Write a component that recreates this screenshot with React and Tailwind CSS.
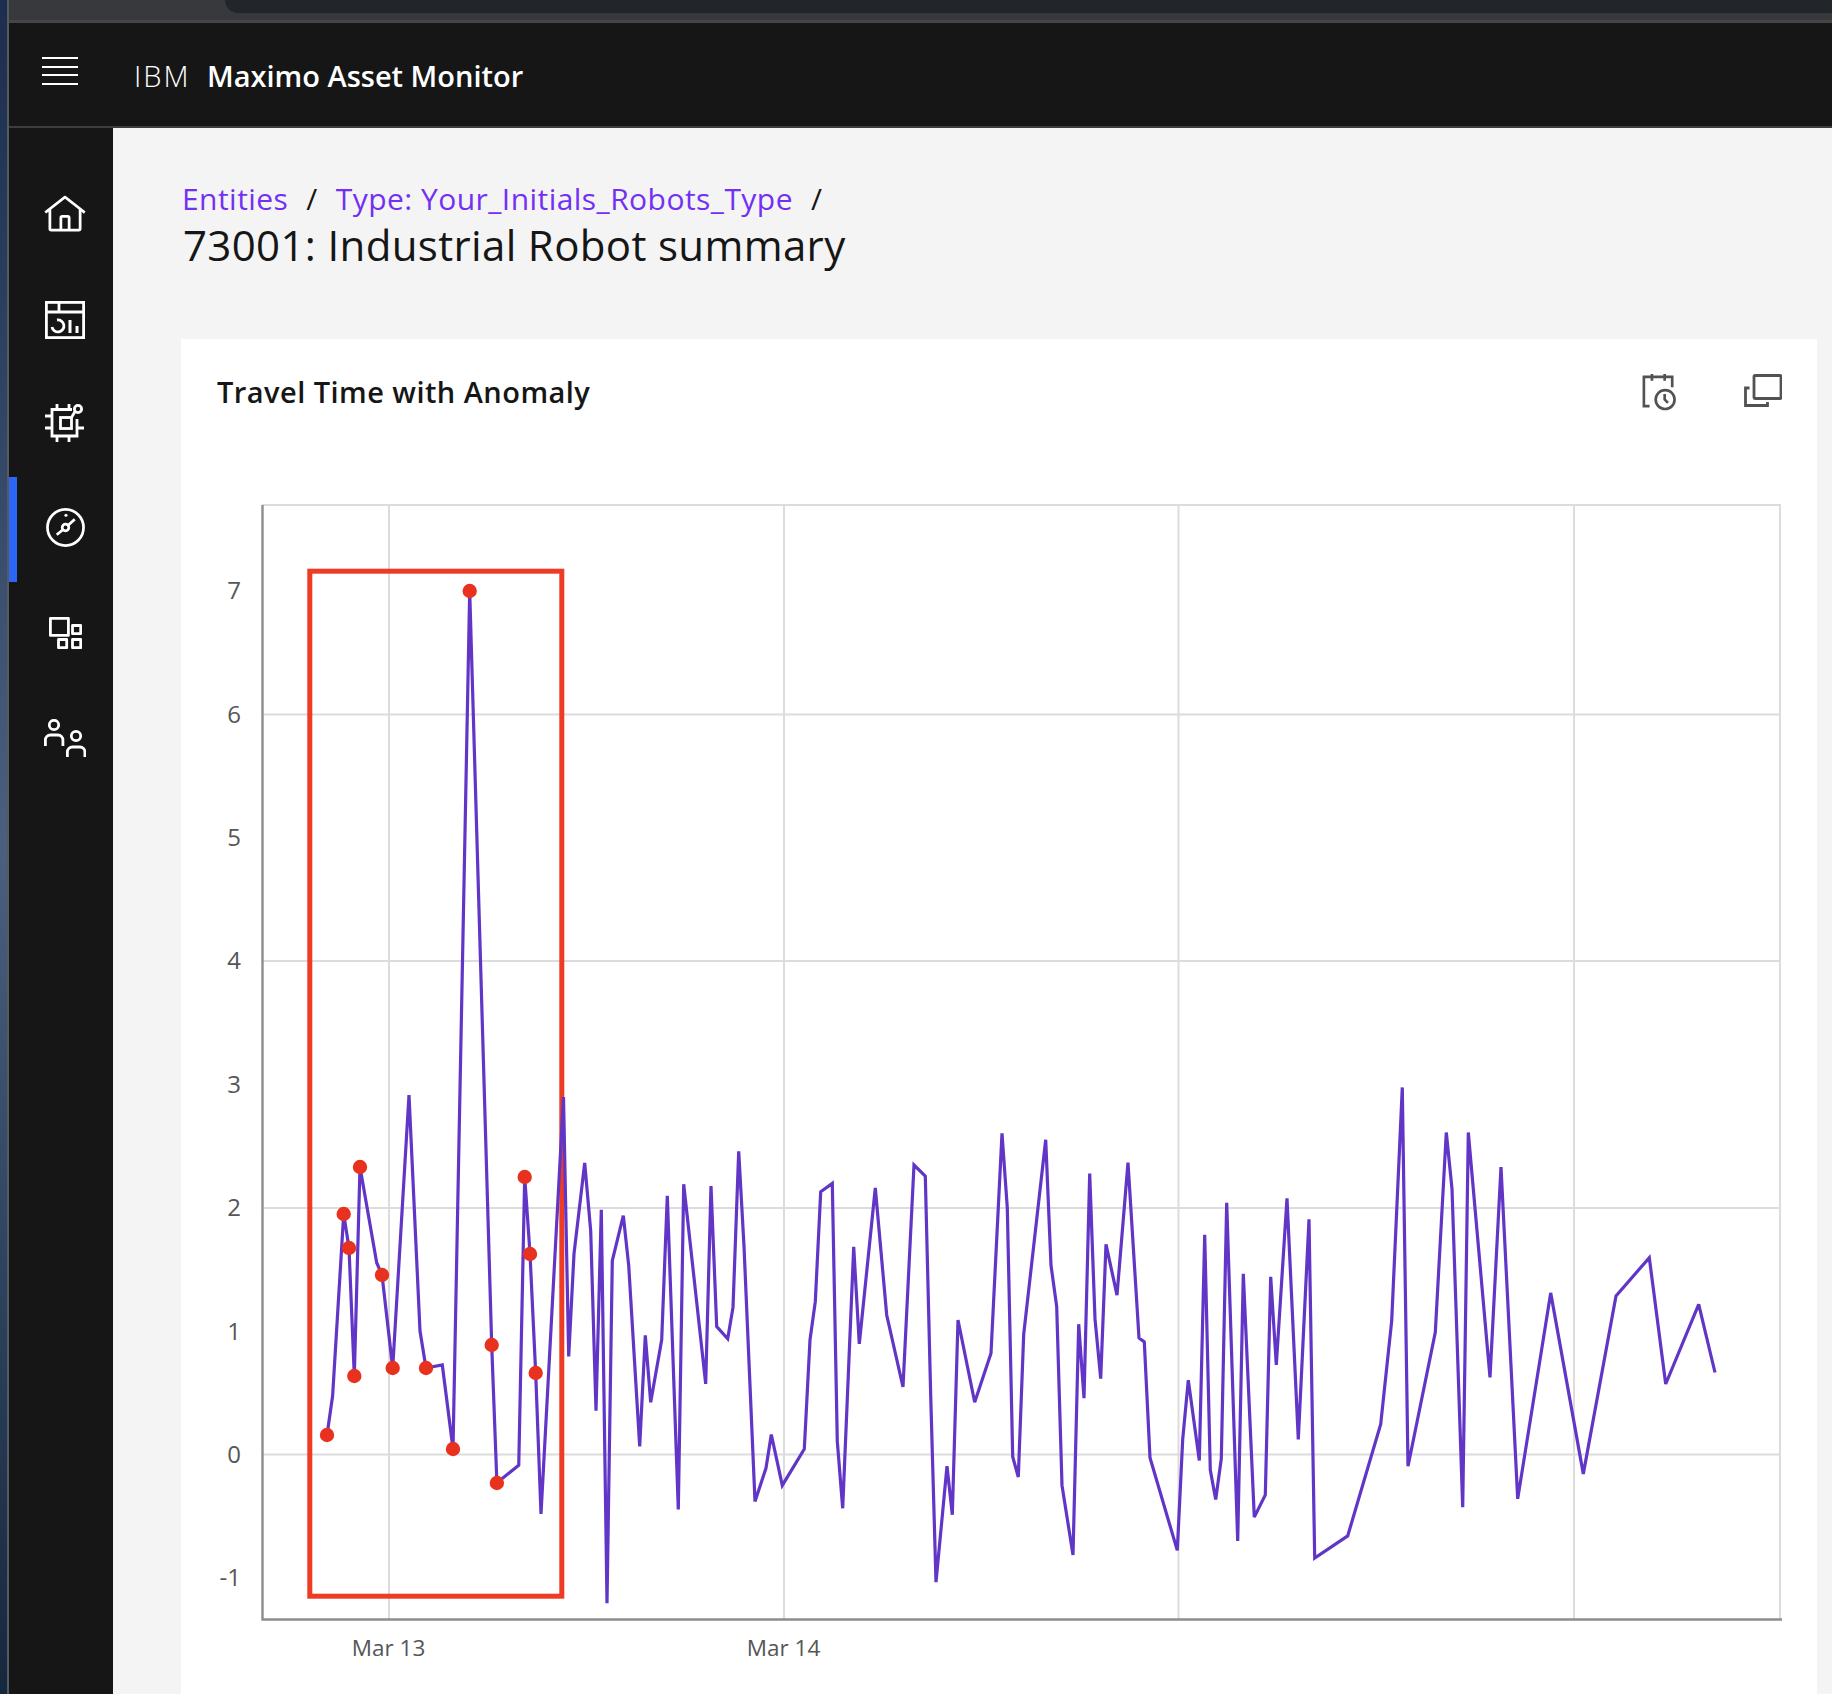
import React from 'react';

const sans = "font-['Open_Sans','Liberation_Sans',sans-serif]";

// series in page pixels, read off the chart
const series = [
  [327, 1434], [332.6, 1395], [343.7, 1213], [349, 1247], [354.3, 1375], [360, 1166], [376.7, 1261.7], [382, 1274],
  [392.7, 1367], [409, 1094], [420, 1330], [426, 1367], [442.3, 1364], [453, 1447.7], [469.7, 590], [491.7, 1344],
  [496.9, 1481.7], [518.75, 1464.3], [524.7, 1175.7], [530, 1252.7], [535.7, 1372.3], [541, 1513], [563.5, 1096],
  [568.7, 1355.4], [574, 1252.8], [584.7, 1162], [590.7, 1229.9], [596, 1409.7], [601.3, 1208.8], [607, 1602.2],
  [612.3, 1259.7], [623.3, 1214.6], [628.7, 1264.3], [639.7, 1445.3], [645.3, 1334.3], [650.7, 1401.3], [661.7, 1338.9],
  [667.3, 1194.7], [678.3, 1508.5], [683.7, 1183.2], [705.7, 1382.9], [711, 1185.1], [716.7, 1325.5], [727.7, 1337.8],
  [733, 1306.4], [738.7, 1150.3], [744, 1245.2], [755, 1500.4], [766, 1467.1], [771.3, 1433.5], [782.3, 1484.4],
  [804.3, 1448], [810, 1338.9], [815.3, 1300.7], [820.7, 1190.8], [832.3, 1182.4], [837.3, 1440.4], [842.7, 1507.3],
  [853.7, 1245.9], [859.3, 1342.8], [875.3, 1187], [886.7, 1314], [903, 1386], [914, 1164], [925.3, 1175.1],
  [930.7, 1394.4], [936, 1581.2], [947, 1465.2], [952.3, 1513.8], [958, 1319], [974.7, 1401.3], [991, 1352.3],
  [1002, 1132.3], [1007.3, 1206.9], [1012.7, 1455.7], [1018.3, 1476], [1023.7, 1333.2], [1045.7, 1138.8], [1051, 1264.3],
  [1056.7, 1305.6], [1062, 1484.4], [1073, 1554], [1078.7, 1323.2], [1084, 1397.1], [1089.7, 1172.5], [1095, 1317.9],
  [1100.7, 1377.6], [1106, 1243.3], [1117, 1294.2], [1128, 1161.7], [1139, 1337], [1144.3, 1340.9], [1150, 1456.8],
  [1177.3, 1549.4], [1182.7, 1438.4], [1188.3, 1379.1], [1199.3, 1459.5], [1204.7, 1233.7], [1210.3, 1469.1],
  [1215.7, 1498.5], [1221.3, 1457.6], [1226.7, 1201.9], [1237.7, 1539.9], [1243.3, 1272.7], [1254.3, 1516.1],
  [1265.3, 1493.9], [1270.7, 1275.8], [1276.3, 1363.8], [1287, 1197.3], [1298.3, 1438.4], [1309, 1218.4], [1314.7, 1557.1],
  [1347.7, 1534.9], [1380.7, 1423.1], [1391.7, 1319.8], [1402.3, 1086.4], [1408, 1465.2], [1435.3, 1331.3], [1446.3, 1131.5],
  [1452, 1187.8], [1462.7, 1506.2], [1468.3, 1131.5], [1490, 1376.4], [1501, 1166], [1517.7, 1497.8], [1550.7, 1291.9],
  [1583.3, 1472.9], [1616, 1294.9], [1649.3, 1256.7], [1665.7, 1383], [1698.7, 1303.4], [1715, 1371.5],
];

const anomalies = [
  [327, 1434], [343.7, 1213], [349, 1247], [354.3, 1375], [360, 1166], [382, 1274], [392.7, 1367], [426, 1367],
  [453, 1448], [469.7, 590], [491.7, 1344], [496.9, 1482], [524.7, 1176], [530, 1253], [535.7, 1372],
];

const yTicks = [[7, 589], [6, 712.5], [5, 835.5], [4, 959], [3, 1083], [2, 1206], [1, 1330], [0, 1452.5], [-1, 1576]];

function HomeIcon() {
  return (
    <svg viewBox="0 0 32 32" className="w-[44px] h-[44px]" fill="currentColor">
      <path d="M16.6123,2.2138a1.01,1.01,0,0,0-1.2427,0L1,13.4194l1.2427,1.5717L4,13.6209V26a2.0041,2.0041,0,0,0,2,2H26a2.0037,2.0037,0,0,0,2-2V13.63L29.7573,15,31,13.4282ZM18,26H14V18h4Zm2,0V18a2.0023,2.0023,0,0,0-2-2H14a2.002,2.002,0,0,0-2,2v8H6V12.0615l10-7.79,10,7.8005V26Z" />
    </svg>
  );
}

function DashboardIcon() {
  return (
    <svg viewBox="0 0 40 38" className="w-[40px] h-[38px]" fill="none" stroke="currentColor" strokeWidth="2.8">
      <rect x="1.4" y="1.4" width="37.2" height="35.2" />
      <path d="M1.4 11h37.2M14 1.4V11" />
      <path d="M7 26a6 6 0 1 0 5-7" />
      <path d="M25 32V19M32 32V25" strokeWidth="3" />
    </svg>
  );
}

function ChipIcon() {
  return (
    <svg viewBox="0 0 40 38" className="w-[40px] h-[38px] -translate-y-[2px]" fill="none" stroke="currentColor" strokeWidth="2.8">
      <path d="M27 5.5H7V32h25V15" />
      <rect x="15.5" y="13.5" width="11" height="11" />
      <path d="M12 0v5.5M24 0v5.5M12 32v6M24 32v6M0 12h7M0 24h7M32 24h7" />
      <path d="M26.5 13.5l3.5-6" />
      <circle cx="33" cy="5" r="3.6" />
    </svg>
  );
}

function CompassIcon() {
  return (
    <svg viewBox="0 0 40 40" className="w-[39px] h-[39px] -translate-y-[2px]" fill="none" stroke="currentColor" strokeWidth="2.8">
      <circle cx="20" cy="20" r="18.5" />
      <circle cx="20" cy="20" r="3.4" />
      <path d="M23 17.5L29.5 11.5M17 22.5L11 27.5" />
      <circle cx="20.5" cy="7.5" r="1.6" fill="currentColor" stroke="none" />
    </svg>
  );
}

function AppsIcon() {
  return (
    <svg viewBox="0 0 33 32" className="w-[33px] h-[32px] -translate-y-[2px]" fill="none" stroke="currentColor" strokeWidth="2.8" strokeLinejoin="round">
      <rect x="1.4" y="1.4" width="18" height="17" />
      <rect x="23.5" y="8.5" width="8.2" height="8.2" />
      <rect x="9.5" y="22.5" width="8.2" height="8.2" />
      <rect x="23.5" y="22.5" width="8.2" height="8.2" />
    </svg>
  );
}

function UsersIcon() {
  return (
    <svg viewBox="0 0 42 38" className="w-[42px] h-[38px] -translate-y-[2px]" fill="none" stroke="currentColor" strokeWidth="2.8">
      <circle cx="10" cy="6" r="4.7" />
      <path d="M1.4 27v-6a5 5 0 0 1 5-5h7.5a5 5 0 0 1 5 5v6" />
      <circle cx="32" cy="17" r="4.7" />
      <path d="M23.4 38v-5a5 5 0 0 1 5-5h7.5a5 5 0 0 1 5 5v5" />
    </svg>
  );
}

function CalendarClockIcon() {
  return (
    <svg viewBox="0 0 36 40" className="w-[34px] h-[38px] text-[#525252]" fill="none" stroke="currentColor" strokeWidth="2.8">
      <path d="M8 35H2V4h30v11" />
      <path d="M10.5 1v7M24 1v7" />
      <circle cx="24.5" cy="28" r="10" />
      <path d="M24 22v6l3.5 3.5" />
    </svg>
  );
}

function CopyIcon() {
  return (
    <svg viewBox="0 0 38 33" className="w-[38px] h-[33px] mt-[1px] text-[#525252]" fill="none" stroke="currentColor" strokeWidth="2.8">
      <rect x="10" y="1.5" width="27" height="23" rx="1" />
      <path d="M5.5 14H1.5v17.5h22V28" />
    </svg>
  );
}

const navItems = [
  { key: 'home', Icon: HomeIcon },
  { key: 'dash', Icon: DashboardIcon },
  { key: 'chip', Icon: ChipIcon },
  { key: 'compass', Icon: CompassIcon, active: true },
  { key: 'apps', Icon: AppsIcon },
  { key: 'users', Icon: UsersIcon },
];

function Chart() {
  const line = series.map((p) => p.join(',')).join(' ');
  return (
    <svg viewBox="181 460 1636 1234" className="block w-[1636px] h-[1234px]">
      <g stroke="#dcdcdc" strokeWidth="2" fill="none">
        <path d="M262 504H1780V1618" />
        <path d="M262 713.5H1780M262 960H1780M262 1207H1780M262 1453.5H1780" />
        <path d="M389 504V1618M784 504V1618M1178.5 504V1618M1574 504V1618" />
      </g>
      <path d="M262.5 504V1618.5H1782" stroke="#8d8d8d" strokeWidth="2.4" fill="none" />
      <rect x="309.8" y="570.2" width="252" height="1025" fill="none" stroke="#ee3b24" strokeWidth="5" />
      <polyline points={line} fill="none" stroke="#6136c6" strokeWidth="3.2" strokeLinejoin="miter" strokeMiterlimit="3" />
      {anomalies.map(([x, y]) => (
        <circle key={x} cx={x} cy={y} r="7.2" fill="#e8321f" />
      ))}
      <g fill="#565656" fontFamily="Open Sans, sans-serif" fontSize="24">
        {yTicks.map(([v, y]) => (
          <text key={v} x="241" y={y + 9} textAnchor="end">{v}</text>
        ))}
      </g>
      <g fill="#565656" fontFamily="Open Sans, sans-serif" fontSize="22.5">
        <text x="388.5" y="1655" textAnchor="middle">Mar 13</text>
        <text x="783.5" y="1655" textAnchor="middle">Mar 14</text>
      </g>
    </svg>
  );
}

export default function App() {
  return (
    <div className={`flex w-[1832px] h-[1694px] overflow-hidden ${sans}`}>
      <div className="w-[9px] shrink-0 bg-linear-to-b from-[#1c2d4d] via-[#4b5f7f] to-[#16283e] border-r-2 border-[#555a60]" />
      <div className="flex-1 flex flex-col min-w-0">
        <div className="h-[23px] shrink-0 bg-[#37393d] border-b-[3px] border-[#44464a] pl-[216px]">
          <div className="h-[13px] bg-[#22252a] rounded-bl-[16px]" />
        </div>

        <header className="h-[105px] shrink-0 bg-[#161616] border-b-2 border-[#3d3d3d] flex items-center text-white">
          <button className="w-[125px] pl-[33px] -mt-[7px] flex flex-col gap-[6.5px]">
            <span className="block w-[36px] h-[2px] bg-white" />
            <span className="block w-[36px] h-[2px] bg-white" />
            <span className="block w-[36px] h-[2px] bg-white" />
            <span className="block w-[36px] h-[2px] bg-white" />
          </button>
          <div className="text-[29px] leading-[36px] mt-[2px] flex">
            <span className="font-light w-[73px] tracking-[2px]">IBM</span>
            <span className="font-semibold">Maximo Asset Monitor</span>
          </div>
        </header>

        <div className="flex-1 flex min-h-0">
          <nav className="w-[104px] shrink-0 bg-[#161616] pt-[34px] text-white">
            {navItems.map(({ key, Icon, active }) => (
              <div
                key={key}
                className={`h-[105px] flex items-center justify-center border-l-8 ${active ? 'border-[#2b66f6]' : 'border-transparent'}`}
              >
                <Icon />
              </div>
            ))}
          </nav>

          <main className="flex-1 bg-[#f4f4f4] pl-[68px] pr-[15px] pt-[51px] flex flex-col min-w-0">
            <div className="text-[30px] leading-[40px] tracking-[0.45px] flex pl-[1px] text-[#7330f5]">
              <span>Entities</span>
              <span className="text-[#161616] mx-[18px]">/</span>
              <span>Type: Your_Initials_Robots_Type</span>
              <span className="text-[#161616] ml-[18px]">/</span>
            </div>
            <h1 className="text-[42px] leading-[52px] tracking-[0.35px] font-normal text-[#161616] pl-[2px]">73001: Industrial Robot summary</h1>

            <section className="mt-[68px] flex-1 bg-white min-h-0">
              <div className="h-[122px] flex items-start justify-between pl-[36px] pr-[35px]">
                <h2 className="text-[29px] leading-[40px] tracking-[0.45px] font-semibold text-[#161616] mt-[33px]">Travel Time with Anomaly</h2>
                <div className="flex items-start gap-[68px] mt-[34px]">
                  <CalendarClockIcon />
                  <CopyIcon />
                </div>
              </div>
              <Chart />
            </section>
          </main>
        </div>
      </div>
    </div>
  );
}
